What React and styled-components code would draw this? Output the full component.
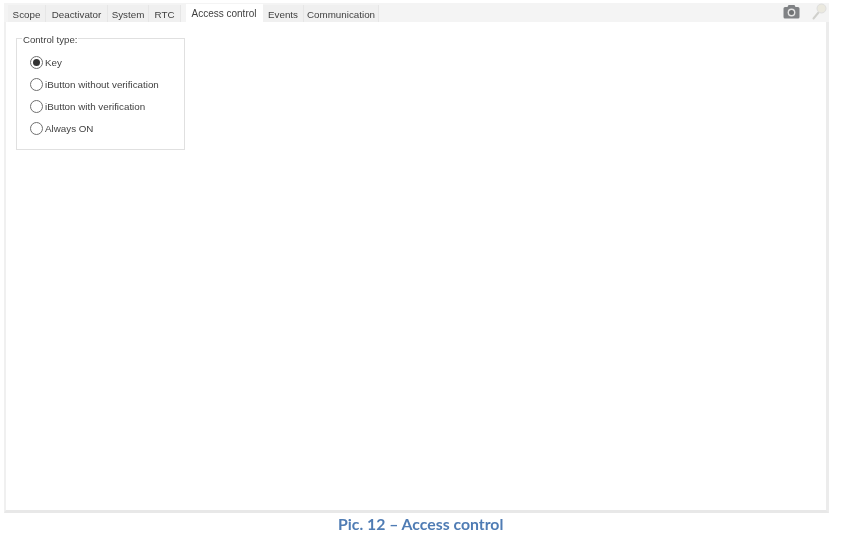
import React from 'react';
import styled, { createGlobalStyle } from 'styled-components';

const tabs = [
  { label: 'Scope', width: 38 },
  { label: 'Deactivator', width: 62 },
  { label: 'System', width: 41 },
  { label: 'RTC', width: 32 },
  { label: 'Access control', width: 77, active: true, gap: 5 },
  { label: 'Events', width: 41 },
  { label: 'Communication', width: 75 },
];

const options = [
  { label: 'Key', checked: true },
  { label: 'iButton without verification' },
  { label: 'iButton with verification' },
  { label: 'Always ON' },
];

const App = () => {
  return (
    <Page>
      <GlobalStyle />
      <Window>
        <TabBar>
          <TabList>
            {tabs.map((tab) => (
              <Tab key={tab.label} $active={tab.active} $width={tab.width} $gap={tab.gap}>
                {tab.label}
              </Tab>
            ))}
          </TabList>
          <Tools>
            <svg width="17" height="15" viewBox="0 0 17 15">
              <path
                d="M5.500 1h6l1 2h2.500a1.500 1.500 0 0 1 1.500 1.500v8.500a1.500 1.500 0 0 1-1.500 1.500h-13a1.500 1.500 0 0 1-1.500-1.500v-8.500a1.500 1.500 0 0 1 1.500-1.500h2.500z"
                fill="#808285"
              />
              <circle cx="8.500" cy="8.500" r="3.900" fill="#e4e4e4" />
              <circle cx="8.500" cy="8.500" r="2.500" fill="#6f7173" />
            </svg>
            <svg width="15" height="17" viewBox="0 0 15 17">
              <path d="M1.500 15.500l5-6" stroke="#d0d0cc" strokeWidth="2" strokeLinecap="round" />
              <circle cx="9.500" cy="5.500" r="4.500" fill="#ebe9df" stroke="#dedede" />
            </svg>
          </Tools>
        </TabBar>
        <Panel>
          <GroupBox>
            <GroupTitle>Control type:</GroupTitle>
            {options.map((option) => (
              <RadioRow key={option.label}>
                <Radio $checked={option.checked} />
                {option.label}
              </RadioRow>
            ))}
          </GroupBox>
        </Panel>
      </Window>
      <Caption>Pic. 12 – Access control</Caption>
    </Page>
  );
};

const GlobalStyle = createGlobalStyle`
  html, body {
    margin: 0;
    background: #fff;
  }
`;

const Page = styled.div`
  width: 843px;
  height: 534px;
  overflow: hidden;
  background: #fff;
  font-family: "Liberation Sans", Arial, sans-serif;
  color: #3f3f3f;
  filter: blur(0.4px);
`;

const Window = styled.div`
  margin: 3px 0 0 4px;
  width: 825px;
`;

const TabBar = styled.div`
  height: 19px;
  display: flex;
  justify-content: space-between;
  background: #f4f4f4;
`;

const TabList = styled.div`
  display: flex;
  align-items: flex-start;
  padding: 2px 0 0 4px;
`;

const Tab = styled.div`
  width: ${(p) => p.$width}px;
  height: ${(p) => (p.$active ? 20 : 17)}px;
  margin-left: ${(p) => p.$gap || 0}px;
  margin-top: ${(p) => (p.$active ? -1 : 0)}px;
  padding-top: 1px;
  display: flex;
  justify-content: center;
  align-items: flex-start;
  box-sizing: border-box;
  font-size: ${(p) => (p.$active ? 10 : 9.8)}px;
  line-height: 18px;
  white-space: nowrap;
  background: ${(p) => (p.$active ? '#fff' : '#f0f0f0')};
  border-right: 1px solid ${(p) => (p.$active ? '#fff' : '#e6e6e6')};
`;

const Tools = styled.div`
  display: flex;
  align-items: center;
  gap: 12px;
  padding-right: 2px;
  margin-top: -3px;
`;

const Panel = styled.div`
  height: 491px;
  box-sizing: border-box;
  background: #fff;
  border-left: 2px solid #f0f0f0;
  border-right: 3px solid #ececec;
  border-bottom: 3px solid #e8e8e8;
  padding: 16px 0 0 10px;
`;

const GroupBox = styled.div`
  position: relative;
  width: 169px;
  height: 112px;
  box-sizing: border-box;
  border: 1px solid #e0e0e0;
  padding: 12px 0 0 13px;
`;

const GroupTitle = styled.div`
  position: absolute;
  top: -5px;
  left: 5px;
  padding: 0 1px;
  background: #fff;
  font-size: 9.6px;
`;

const RadioRow = styled.div`
  height: 22px;
  display: flex;
  align-items: center;
  gap: 2px;
  font-size: 9.8px;
  white-space: nowrap;
`;

const Radio = styled.span`
  width: 13px;
  height: 13px;
  box-sizing: border-box;
  border: 1px solid #707070;
  border-radius: 50%;
  display: flex;
  justify-content: center;
  align-items: center;

  &::after {
    content: "";
    width: 7px;
    height: 7px;
    border-radius: 50%;
    background: ${(p) => (p.$checked ? '#333' : 'transparent')};
  }
`;

const Caption = styled.div`
  margin-top: 1px;
  padding-left: 338px;
  font-family: Lato, "Liberation Sans", sans-serif;
  font-size: 15.8px;
  font-weight: 700;
  color: #4f7cb4;
`;

export default App;
